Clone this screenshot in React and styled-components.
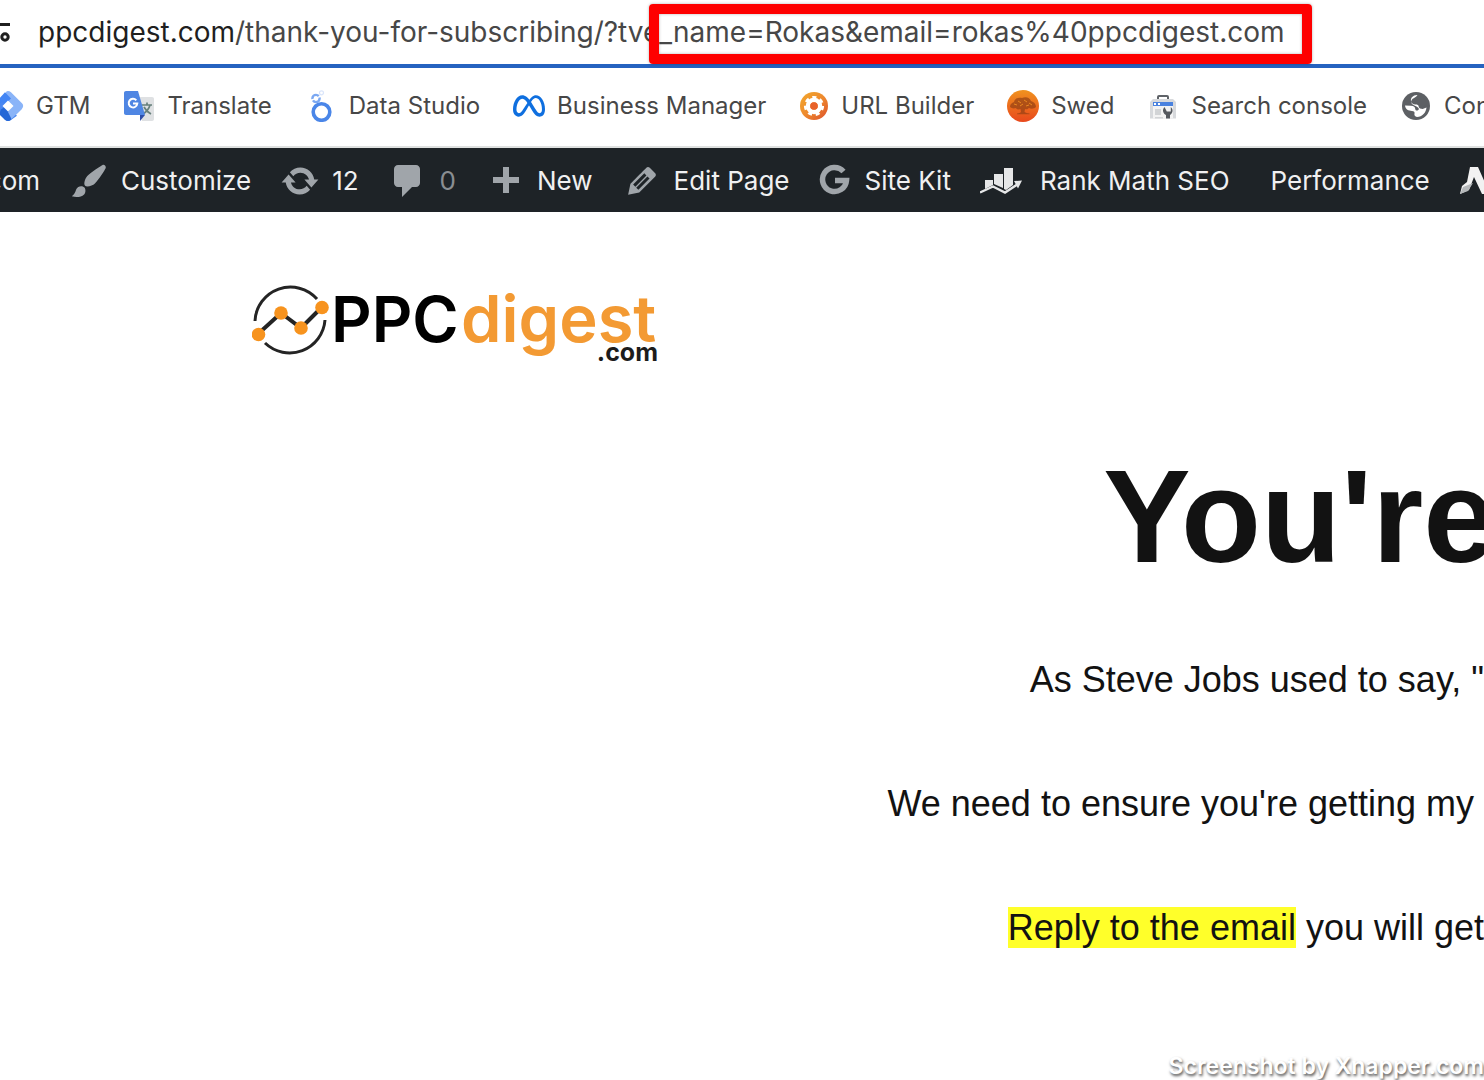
import React from 'react';
import styled, { createGlobalStyle } from 'styled-components';
import { SiMeta } from 'react-icons/si';

const GlobalStyle = createGlobalStyle`
  * {
    box-sizing: border-box;
  }
  body {
    margin: 0;
    background-color: #fff;
    overflow: hidden;
    font-family: Inter, "Liberation Sans", sans-serif;
  }
`;

const Page = styled.div`
  position: relative;
  min-height: 100vh;
  display: flex;
  flex-direction: column;
  overflow: hidden;
`;

const AddressBar = styled.header`
  display: flex;
  align-items: center;
  gap: 28px;
  height: 68px;
  border-bottom: 4px solid #2563c0;
  color: #474747;
  white-space: nowrap;
`;

const Url = styled.div`
  font-size: 28px;
  line-height: 36px;
`;

const Domain = styled.span`
  color: #1f1f1f;
`;

const Marked = styled.span`
  position: relative;
  &::after {
    content: "";
    position: absolute;
    top: -11px;
    bottom: -15px;
    left: -10px;
    right: -27px;
    border: 10px solid #fe0000;
    border-radius: 4px;
    box-shadow: 0 0 3px rgba(0, 0, 0, 0.3), inset 0 0 3px rgba(0, 0, 0, 0.3);
  }
`;

const Bookmarks = styled.nav`
  display: flex;
  align-items: center;
  gap: 33px;
  height: 80px;
  margin-left: -8px;
  padding-bottom: 2px;
  border-bottom: 2px solid #dfe1e0;
`;

const Bookmark = styled.a`
  display: flex;
  flex-shrink: 0;
  align-items: center;
  gap: 12px;
  color: #474747;
  font-size: 24px;
  line-height: 32px;
  text-decoration: none;
  white-space: nowrap;
`;

const AdminBar = styled.nav`
  display: flex;
  align-items: center;
  gap: 29px;
  height: 64px;
  padding-top: 2px;
  background-color: #1e2327;
`;

const AdminLink = styled.a`
  display: flex;
  flex-shrink: 0;
  align-items: center;
  gap: 12px;
  color: ${props => (props.$muted ? '#8a8e92' : '#f0f0f1')};
  font-size: 26px;
  line-height: 32px;
  text-decoration: none;
  white-space: nowrap;
`;

const SiteLink = styled(AdminLink)`
  width: 40px;
  justify-content: flex-end;
`;

const PlainLink = styled(AdminLink)`
  padding-left: 12px;
`;

const Icon = styled.svg`
  display: block;
  flex-shrink: 0;
`;

const MetaIcon = styled(SiMeta)`
  color: #0f6fdf;
`;

const Content = styled.main`
  flex: 1;
  display: flex;
  flex-direction: column;
  padding-top: 70px;
  color: #121212;
  font-family: "Liberation Sans", Arial, sans-serif;
`;

const LogoLink = styled.a`
  align-self: flex-start;
  margin-left: 17%;
  font-family: Inter, sans-serif;
`;

const Title = styled.h1`
  margin: 76px -12px 0 0;
  font-size: 131px;
  line-height: 150px;
  text-align: right;
  white-space: nowrap;
`;

const Paragraph = styled.p`
  margin: 60px 0 0;
  font-size: 36px;
  line-height: 64px;
  text-align: right;
  white-space: nowrap;
  ${Title} + & {
    margin-top: 56px;
  }
`;

const Highlight = styled.mark`
  background-color: #ffff2a;
  color: inherit;
`;

const Watermark = styled.footer`
  position: absolute;
  right: 0;
  bottom: 0;
  color: #fff;
  font-size: 23px;
  font-weight: 600;
  line-height: 28px;
  text-shadow: 1px 2px 3px rgba(0, 0, 0, 0.7);
`;

const TuneIcon = () => (
  <Icon width="10" height="24" viewBox="0 0 10 24" fill="none" stroke="#1f1f1f" strokeWidth="3">
    <path d="M0 4.5h10" />
    <circle cx="5" cy="17" r="3.2" />
  </Icon>
);

const TagManagerIcon = () => (
  <Icon width="32" height="32" viewBox="0 0 32 32">
    <path d="M16 1c1 0 2 .5 3 1.3l11 11c1.6 1.6 1.6 3.8 0 5.4L19 29.7 10 21l6-5-6-5 4-9c.6-.6 1.3-1 2-1z" fill="#8ab4f8" />
    <path d="M13 2.3 19 8.5 8.500 19l-6-.5c-1.500-1.500-1.500-3.500 0-5z" fill="#4285f4" />
    <path d="m2.500 18.700 7.500-6.700 15 13.700-5.700 4c-2 1.700-4.400 1.700-6.400 0z" fill="#4a87f0" />
    <path d="m9 19.500 5-3.500 7 7-2 6.700c-2 1.700-4 1.700-6 0L7 24z" fill="#2467d6" />
    <path d="M21 10.500 30 18.700 19.500 29l-3.500-7z" fill="#8ab4f8" />
    <path d="m16 10.500 5.500 5.500-5.500 5.500-5.500-5.500z" fill="#fff" />
  </Icon>
);

const TranslateIcon = () => (
  <Icon width="32" height="32" viewBox="0 0 32 32">
    <path d="M12 7h17c1.200 0 2 .8 2 2v20c0 1.200-.8 2-2 2H19z" fill="#dfe1e3" />
    <path d="M17 25h5l-5 6z" fill="#2f4ea8" />
    <path d="M19 15h10M24 12.500V15M27 15c-1 4-4 7-7 9M21 17c1.500 3 4 5.500 7 7" stroke="#67807c" strokeWidth="1.7" fill="none" />
    <path d="M3 1h12l7 24H3c-1.200 0-2-.8-2-2V3c0-1.200.8-2 2-2z" fill="#4f86e3" />
    <path d="M13.300 10.300a4.300 4.300 0 1 0 1 3.200H10" stroke="#fff" strokeWidth="2" fill="none" />
  </Icon>
);

const DataStudioIcon = () => (
  <Icon width="32" height="32" viewBox="0 0 32 32" fill="none">
    <circle cx="16.5" cy="22" r="8.3" stroke="#4a86e8" strokeWidth="3.6" />
    <circle cx="11" cy="8.5" r="3.6" stroke="#7ba8f2" strokeWidth="2.4" strokeDasharray="9 1.5" />
    <circle cx="16.5" cy="2.8" r="2" stroke="#d9e5fb" strokeWidth="1.2" />
  </Icon>
);

const CogBadgeIcon = () => (
  <Icon width="30" height="30" viewBox="0 0 30 30">
    <defs>
      <linearGradient id="cogBadge" x1="0" y1="0" x2="1" y2="1">
        <stop offset="0" stopColor="#f2a92c" />
        <stop offset="0.5" stopColor="#ee8a2e" />
        <stop offset="1" stopColor="#dc4f2b" />
      </linearGradient>
    </defs>
    <circle cx="15" cy="15" r="14" fill="url(#cogBadge)" />
    <circle cx="15" cy="15" r="6" fill="none" stroke="#fff" strokeWidth="4.5" />
    <circle cx="15" cy="15" r="8.6" fill="none" stroke="#fff" strokeWidth="3" strokeDasharray="4 3.72" />
    <circle cx="15" cy="15" r="3.8" fill="#e8622a" />
  </Icon>
);

const OakIcon = () => (
  <Icon width="32" height="32" viewBox="0 0 32 32">
    <defs>
      <linearGradient id="oakCoin" x1="0" y1="0" x2="0" y2="1">
        <stop offset="0" stopColor="#f0921f" />
        <stop offset="1" stopColor="#e8481c" />
      </linearGradient>
    </defs>
    <circle cx="16" cy="16" r="16" fill="url(#oakCoin)" />
    <path d="M3 17c0-3 2-4 4-5 1-4 5-5 8-4 4-2 8 0 9 3 3 1 5 3 5 6-2 2-5 2-7 1-2 2-3 1-4 1l-.5 3c1 1 3 1 5 1.500v.8H10v-.8c2-.5 3.500-.5 4-1.500l-.5-3c-2 1-4 0-5-1-2 1-4 0-5.500-1z" fill="#8e3d12" opacity="0.65" />
    <path d="M7 14l3 1M11 11l3 2M17 10l3 2M22 13l3 2M13 16l3-2M19 16l3-1" stroke="#e9861f" strokeWidth="1" />
  </Icon>
);

const SearchConsoleIcon = () => (
  <Icon width="32" height="32" viewBox="0 0 32 32">
    <path d="M11 9V7c0-.8.5-1 1-1h8c.6 0 1 .3 1 1v2" fill="none" stroke="#5f6368" strokeWidth="2" />
    <path d="M6 9h20l3 3v16.500H3V12z" fill="#d7d9dc" />
    <path d="M6 16h20v12.500H6z" fill="#f3f3f3" />
    <path d="M6 12h20v4H6z" fill="#4a82df" />
    <path d="M7 13h2v2H7zM11 13h2v2h-2z" fill="#fff" />
    <path d="M8 19h6v6H8zM8 27h8v1.500H8z" fill="#d2d4d6" />
    <path d="M17.500 17c-3 3-1 7 1.500 8v3.500h4V25c3-2 3.500-5.500.8-8v4.500h-4z" fill="#55595e" />
  </Icon>
);

const GlobeIcon = () => (
  <Icon width="32" height="32" viewBox="0 0 32 32">
    <circle cx="16" cy="16" r="14" fill="#5d6064" />
    <path d="M17.500 5c4.500.5 8.500 4.500 9.300 9.500-1.800 2.500-5 2.200-6.300.3-.6-.9-1.500-.8-2.500-.8-2.300 0-3.300-1-3-3 .2-1.500 1.700-1.600 2.600-2.300.8-.8.4-2-.1-3.700z" fill="#5d6064" />
    <path d="M17.500 5c-4.500-.2-7 3-6.500 6 .3 2.300 2 3.500 4.500 3.500 2 0 3 .5 3.200 2 .3 1.800 2 2.500 4 2.500l3.800-1.500c-.3 5-4.300 9.300-9.500 9.500-2-.5-3-1.500-2.500-3.500.4-1.500-.5-2.500-2.500-2.500-3.500-.2-6.500-1.500-7-5.500l6 .2c3 .1 4 1.300 4.200 3 .1 1.500 1 2 2.300 1.800 1.500-.3 1.800-2 .5-3-1-.8-2.500-1.500-4.500-2.500-2.500-1.200-3-3.500-1.500-5.500 1.200-1.500 3.500-1.500 5.500-4.500z" fill="#fff" />
  </Icon>
);

const DashIcon = ({ d, top = 0 }) => (
  <Icon width="40" height="40" viewBox={`0 ${top} 20 20`} fill="#a0a5aa">
    <path d={d} />
  </Icon>
);

const brushPath =
  'M18.33 3.57s.27-.8-.31-1.36c-.53-.52-1.22-.24-1.22-.24-.61.3-5.76 3.47-7.67 5.57-.86.96-2.06 3.79-1.09 4.82.92.98 3.96-.17 4.79-1 2.06-2.06 5.21-7.17 5.5-7.79zM1.4 17.65c2.37-1.56 1.46-3.41 3.23-4.64.93-.65 2.22-.62 3.08.29.63.67.8 2.57-.16 3.46-1.57 1.45-4 1.55-6.15.89z';
const updatePath =
  'M10.2 3.28c3.53 0 6.43 2.61 6.92 6h2.08l-3.5 4-3.5-4h2.32c-.45-1.97-2.21-3.45-4.32-3.45-1.45 0-2.73.71-3.54 1.78L4.95 5.66C6.23 4.2 8.11 3.28 10.2 3.28zm-.4 13.44c-3.52 0-6.43-2.61-6.92-6H.8l3.5-4c1.17 1.33 2.33 2.67 3.5 4H5.48c.45 1.97 2.21 3.45 4.32 3.45 1.45 0 2.73-.71 3.54-1.78l1.71 1.95c-1.28 1.46-3.15 2.38-5.25 2.38z';
const commentPath =
  'M5 2h9c1.1 0 2 .9 2 2v7c0 1.1-.9 2-2 2h-2l-5 5v-5H5c-1.1 0-2-.9-2-2V4c0-1.1.9-2 2-2z';
const plusPath = 'M17 7v3h-5v5H9v-5H4V7h5V2h3v5h5z';
const editPath =
  'M13.89 3.39l2.71 2.72c.46.46.42 1.24.03 1.64l-8.01 8.02-5.56 1.16 1.16-5.58s7.6-7.63 7.99-8.03c.39-.39 1.22-.39 1.68.07zm-2.73 2.79l-5.59 5.61 1.11 1.11 5.54-5.65zm-2.97 8.23l5.58-5.6-1.07-1.08-5.59 5.6z';

const SiteKitIcon = () => (
  <Icon width="34" height="36" viewBox="0 0 34 36" fill="none" stroke="#a0a5aa" strokeWidth="5.5">
    <path d="M24.500 8.500A12 12 0 1 0 27.500 17.500H16" />
  </Icon>
);

const RankMathIcon = () => (
  <Icon width="48" height="38" viewBox="0 0 48 38" fill="#e6e7e8">
    <path d="M5 18h8v5l-8 4zM14 12h9v14l-9-4zM24 6h9v17l-7 5-2-1z" />
    <path d="M0 30.500l13-6 12 6L38 22" fill="none" stroke="#e6e7e8" strokeWidth="2.4" />
    <path d="M34 19l8-.5-4 8z" />
  </Icon>
);

const AhrefsIcon = () => (
  <Icon width="40" height="36" viewBox="0 0 40 36">
    <path d="M11 4h8l12 27h-8L15 14l-5 13-9 4 2-8 5-4z" fill="#f2f2f2" />
    <path d="M1 31l3-7 10-4-5 8z" fill="#b5b8ba" />
  </Icon>
);

const Logo = () => (
  <Icon width="410" height="84" viewBox="0 0 410 84" role="img" aria-label="PPCdigest.com">
    <g fill="none" stroke="#242424" strokeWidth="3">
      <path d="M3 39A35.500 35.500 0 0 1 65 17" />
      <path d="M73 38A35.500 35.500 0 0 1 13 61" />
      <path d="M6 52 29 31 49 46 70 25" strokeWidth="4" />
    </g>
    <g fill="#f7931e">
      <circle cx="6.500" cy="52.500" r="6.800" />
      <circle cx="29" cy="31" r="6.800" />
      <circle cx="49" cy="46" r="6.800" />
      <circle cx="70" cy="25.500" r="6.800" />
    </g>
    <text x="79" y="60" fontSize="63" fontWeight="600" fill="#000">PPC</text>
    <text x="209" y="60" fontSize="65" fontWeight="600" fill="#f39a33">digest</text>
    <text x="406" y="79" fontSize="25" fontWeight="700" fill="#1c1c1c" textAnchor="end">.com</text>
  </Icon>
);

const bookmarks = [
  { label: 'GTM', icon: <TagManagerIcon /> },
  { label: 'Translate', icon: <TranslateIcon /> },
  { label: 'Data Studio', icon: <DataStudioIcon /> },
  { label: 'Business Manager', icon: <MetaIcon size={32} /> },
  { label: 'URL Builder', icon: <CogBadgeIcon /> },
  { label: 'Swed', icon: <OakIcon /> },
  { label: 'Search console', icon: <SearchConsoleIcon /> },
  { label: 'Con', icon: <GlobeIcon /> }
];

const adminItems = [
  { label: 'Customize', icon: <DashIcon d={brushPath} /> },
  { label: '12', icon: <DashIcon d={updatePath} /> },
  { label: '0', icon: <DashIcon d={commentPath} />, muted: true },
  { label: 'New', icon: <DashIcon d={plusPath} top={-1} /> },
  { label: 'Edit Page', icon: <DashIcon d={editPath} /> },
  { label: 'Site Kit', icon: <SiteKitIcon /> },
  { label: 'Rank Math SEO', icon: <RankMathIcon /> }
];

const App = () => {
  return (
    <Page>
      <GlobalStyle />
      <AddressBar>
        <TuneIcon />
        <Url role="textbox" aria-label="Address">
          <Domain>ppcdigest.com</Domain>/thank-you-for-subscribing/?tve
          <Marked>_name=Rokas&amp;email=rokas%40ppcdigest.com</Marked>
        </Url>
      </AddressBar>

      <Bookmarks aria-label="Bookmarks">
        {bookmarks.map(bookmark => (
          <Bookmark href="#" key={bookmark.label}>
            {bookmark.icon}
            {bookmark.label}
          </Bookmark>
        ))}
      </Bookmarks>

      <AdminBar aria-label="Admin">
        <SiteLink href="#">.com</SiteLink>
        {adminItems.map(item => (
          <AdminLink href="#" key={item.label} $muted={item.muted}>
            {item.icon}
            {item.label}
          </AdminLink>
        ))}
        <PlainLink href="#">Performance</PlainLink>
        <AdminLink href="#" aria-label="Analytics">
          <AhrefsIcon />
        </AdminLink>
      </AdminBar>

      <Content>
        <LogoLink href="#">
          <Logo />
        </LogoLink>
        <Title>You're</Title>
        <Paragraph>As Steve Jobs used to say, "</Paragraph>
        <Paragraph>We need to ensure you're getting my&nbsp;</Paragraph>
        <Paragraph>
          <Highlight>Reply to the email</Highlight> you will get
        </Paragraph>
      </Content>

      <Watermark>Screenshot by Xnapper.com</Watermark>
    </Page>
  );
};

export default App;
